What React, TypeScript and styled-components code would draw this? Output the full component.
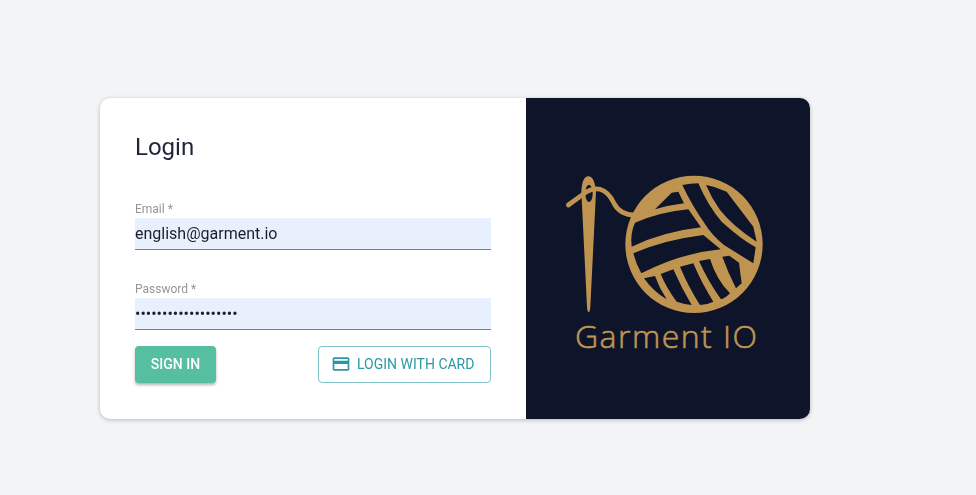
import React from "react";
import styled, { createGlobalStyle } from "styled-components";

const Global = createGlobalStyle`
  html, body { margin: 0; padding: 0; background: #f3f4f6; }
  body { font-family: Roboto, "Liberation Sans", sans-serif; }
  * { box-sizing: border-box; }
`;

const Page = styled.main`
  width: 976px;
  height: 495px;
  padding: 98px 0 0 100px;
  overflow: hidden;
`;

const Card = styled.section`
  display: flex;
  width: 710px;
  height: 321px;
  border-radius: 10px;
  overflow: hidden;
  background: #fff;
  box-shadow: 0 1px 4px rgba(0, 0, 0, 0.25);
`;

const FormPanel = styled.form`
  width: 426px;
  padding: 32px 35px 0;
  display: flex;
  flex-direction: column;
  will-change: transform;
`;

const Title = styled.h1`
  margin: 0 0 38px;
  font-size: 24px;
  line-height: 34px;
  font-weight: 400;
  color: #1f2539;
`;

const Field = styled.label`
  display: flex;
  flex-direction: column;
  margin-bottom: 32px;
`;

const FieldLabel = styled.span`
  font-size: 12px;
  line-height: 14px;
  color: #959595;
  margin-bottom: 2px;
`;

const Input = styled.input`
  height: 32px;
  border: 0;
  border-bottom: 1px solid #76808f;
  border-radius: 0;
  padding: 0;
  outline: 0;
  background: #e8f0fe;
  color: #1c1f2a;
  font-family: Roboto, sans-serif;
  font-size: 16px;
`;

const Actions = styled.div`
  display: flex;
  justify-content: space-between;
  margin-top: -16px;
`;

const SignIn = styled.button`
  width: 81px;
  height: 37px;
  padding: 0 0 2px;
  border: 0;
  border-radius: 4px;
  background: #56bf9f;
  color: #fff;
  font-family: Roboto, sans-serif;
  font-size: 14px;
  font-weight: 500;
  box-shadow: 0 2px 3px rgba(0, 0, 0, 0.3);
`;

const CardLogin = styled.button`
  width: 173px;
  height: 37px;
  display: flex;
  align-items: center;
  gap: 6px;
  padding: 0 0 2px 12px;
  border: 1px solid #7fc3ca;
  border-radius: 4px;
  background: #fff;
  color: #2b98a6;
  font-family: Roboto, sans-serif;
  font-size: 14px;
  font-weight: 400;
`;

const BrandPanel = styled.aside`
  width: 284px;
  background: #0e1429;
`;

const LogoSvg = styled.svg`
  display: block;
  width: 284px;
  height: 321px;
`;

const LogoText = styled.text`
  font-family: "Open Sans", sans-serif;
  font-size: 96px;
  font-weight: 300;
  fill: #bf9450;
  stroke: #bf9450;
  stroke-width: 1.8px;
`;

const GOLD = "#bf9450";
const DARK = "#0e1429";

const gaps = [
  "M345,148 L395,98 L415,95 L432,130 Q390,135 345,148Z",
  "M285,188 Q365,155 445,148 L483,202 Q370,215 275,260 Q270,220 285,188Z",
  "M280,280 Q370,240 490,225 L542,268 Q420,280 304,340 Q288,312 280,280Z",
  "M427,75 Q450,70 475,70 Q505,140 545,185 Q600,235 647,262 L640,310 L552,255 Q515,225 495,192 Q455,135 427,75Z",
  "M498,75 Q530,80 560,95 L640,200 L650,245 Q580,200 540,150 Q515,115 498,75Z",
  "M312,355 L345,348 Q358,385 380,418 Q340,395 312,355Z",
  "M362,342 L400,328 Q425,385 455,435 Q430,432 410,425 Q380,385 362,342Z",
  "M420,320 L460,310 Q485,370 520,425 Q500,435 480,435 Q445,380 420,320Z",
  "M477,303 L510,297 Q530,360 570,400 Q555,415 543,418 Q505,365 477,303Z",
  "M547,290 L568,287 L597,308 L605,370 L588,385 Q565,340 547,290Z",
];

const Logo = () => (
  <LogoSvg viewBox="-42 -186 852 963" role="img" aria-label="Garment IO">
    <path d="M146,457 Q142,455 141,440 L124,95 Q126,50 145,49 Q164,50 168,95 L151,440 Q150,455 146,457Z" fill={GOLD} />
    <ellipse cx="147" cy="100" rx="11" ry="26" fill={DARK} />
    <path d="M85,135 L137,97 Q160,83 180,88 Q205,95 222,130 Q240,165 285,165" fill="none" stroke={GOLD} strokeWidth="14" strokeLinecap="round" />
    <circle cx="462" cy="253" r="206" fill={GOLD} />
    {gaps.map((d) => (
      <path key={d} d={d} fill={DARK} />
    ))}
    <LogoText x="105" y="564" textLength="546" lengthAdjust="spacing">Garment IO</LogoText>
  </LogoSvg>
);

const CardIcon = () => (
  <svg width="20" height="20" viewBox="0 0 24 24" fill="#2b98a6" aria-hidden="true">
    <path d="M20 4H4c-1.11 0-1.99.89-1.99 2L2 18c0 1.11.89 2 2 2h16c1.11 0 2-.89 2-2V6c0-1.11-.89-2-2-2zm0 14H4v-6h16v6zm0-10H4V6h16v2z" />
  </svg>
);

export default function App() {
  return (
    <Page>
      <Global />
      <Card>
        <FormPanel onSubmit={(e) => e.preventDefault()}>
          <Title>Login</Title>
          <Field>
            <FieldLabel>Email *</FieldLabel>
            <Input type="text" defaultValue="english@garment.io" />
          </Field>
          <Field>
            <FieldLabel>Password *</FieldLabel>
            <Input type="password" defaultValue="abcdefghijklmnopqrs" />
          </Field>
          <Actions>
            <SignIn type="submit">SIGN IN</SignIn>
            <CardLogin type="button">
              <CardIcon />
              LOGIN WITH CARD
            </CardLogin>
          </Actions>
        </FormPanel>
        <BrandPanel>
          <Logo />
        </BrandPanel>
      </Card>
    </Page>
  );
}
